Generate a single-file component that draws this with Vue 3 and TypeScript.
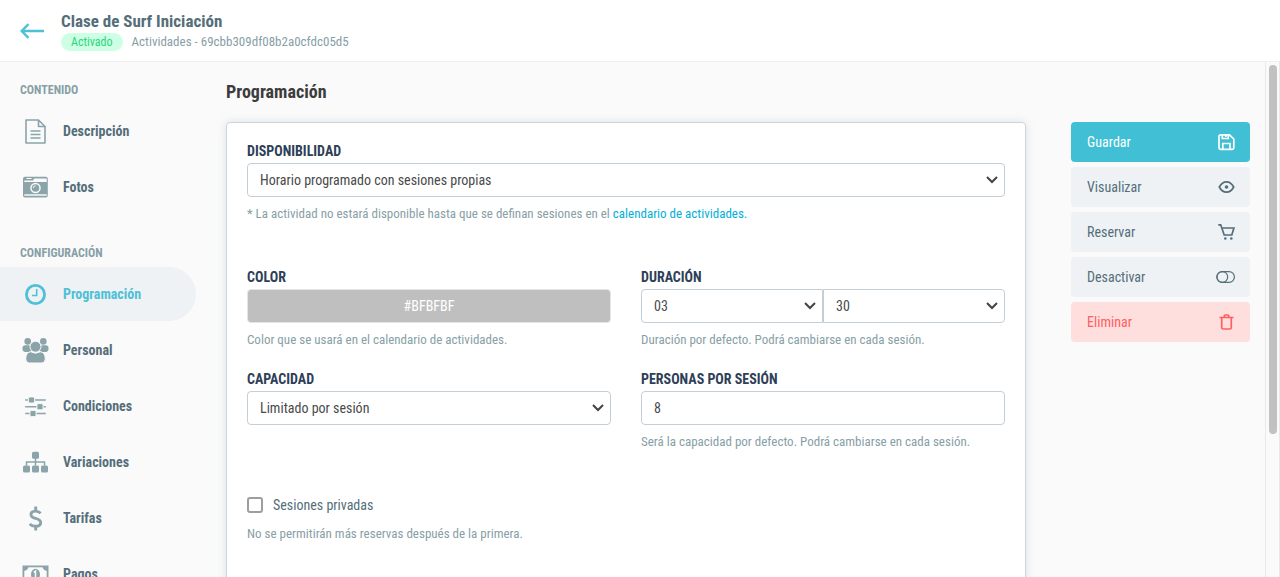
<script setup lang="ts">
import { ref } from 'vue'

interface NavItem {
  label: string
  icon: string
  active?: boolean
}
interface NavGroup {
  title: string
  items: NavItem[]
}

const groups: NavGroup[] = [
  {
    title: 'Contenido',
    items: [
      { label: 'Descripción', icon: 'document' },
      { label: 'Fotos', icon: 'camera' },
    ],
  },
  {
    title: 'Configuración',
    items: [
      { label: 'Programación', icon: 'clock', active: true },
      { label: 'Personal', icon: 'people' },
      { label: 'Condiciones', icon: 'sliders' },
      { label: 'Variaciones', icon: 'tree' },
      { label: 'Tarifas', icon: 'dollar' },
      { label: 'Pagos', icon: 'money' },
    ],
  },
]

const actions = [
  { label: 'Guardar', icon: 'save', tone: 'primary' },
  { label: 'Visualizar', icon: 'eye', tone: 'plain' },
  { label: 'Reservar', icon: 'cart', tone: 'plain' },
  { label: 'Desactivar', icon: 'toggle', tone: 'plain' },
  { label: 'Eliminar', icon: 'trash', tone: 'danger' },
]

const availability = ref('Horario programado con sesiones propias')
const hours = ref('03')
const minutes = ref('30')
const capacity = ref('Limitado por sesión')
const people = ref('8')
const color = ref('#BFBFBF')
const privateSessions = ref(false)
</script>

<template>
  <div class="page">
    <header class="topbar">
      <a class="back" href="#" aria-label="Volver">
        <svg width="24" height="16" viewBox="0 0 24 16" fill="none" stroke="currentColor" stroke-width="2.4">
          <path d="M24 8H2M8.500 1.200L1.700 8l6.800 6.800" />
        </svg>
      </a>
      <div>
        <h1>Clase de Surf Iniciación</h1>
        <div class="meta">
          <span class="badge">Activado</span>
          <span>Actividades - 69cbb309df08b2a0cfdc05d5</span>
        </div>
      </div>
    </header>

    <div class="body">
      <nav class="sidebar">
        <section v-for="group in groups" :key="group.title" class="group">
          <h2>{{ group.title }}</h2>
          <a v-for="item in group.items" :key="item.label" href="#" class="nav-item" :class="{ active: item.active }">
            <svg class="nav-icon" width="27" height="27" viewBox="-.5 -.5 27 27" fill="none" stroke="currentColor">
              <g v-if="item.icon === 'document'" stroke-width="1.6" stroke-linejoin="round">
                <path d="M3.500 1.500h12.500l6.500 6.500v16.500h-19zM16 1.500V8h6.500" />
                <path d="M8 12.500h10M8 16h10M8 19.500h10" />
              </g>
              <g v-else-if="item.icon === 'camera'" stroke="none" fill="currentColor">
                <path fill-rule="evenodd" d="M2.500 2.300h20.800a2 2 0 0 1 2 2v16.800a2 2 0 0 1-2 2h-20.800a2 2 0 0 1-2-2V4.300a2 2 0 0 1 2-2zM1.800 6v1.500h22.400V4H11.500l-.8 2zM1.800 19.700v1.500h22.400v-1.500zM4 3.500v1h5v-1zM13 8.200a5.300 5.300 0 1 0 0 10.600a5.300 5.300 0 0 0 0-10.600z" />
                <circle cx="13" cy="13.500" r="3.800" />
                <path d="M10.800 13.500a2.200 2.200 0 0 1 2.200-2.200" fill="none" stroke="#fafafa" />
              </g>
              <g v-else-if="item.icon === 'clock'">
                <circle cx="13" cy="13" r="9.100" stroke-width="2.800" />
                <path d="M14.200 7.500v6.500H9.500" stroke-width="1.600" />
              </g>
              <g v-else-if="item.icon === 'people'" stroke="none" fill="currentColor">
                <circle cx="5.200" cy="3.900" r="3.300" /><circle cx="20.800" cy="3.900" r="3.300" />
                <rect x="0" y="7.800" width="9" height="6.600" rx="2.800" /><rect x="17" y="7.800" width="9" height="6.600" rx="2.800" />
                <g class="halo">
                  <circle cx="13" cy="9.200" r="5.500" />
                  <path d="M8.300 14.200Q13 17.200 17.700 14.200Q22.800 14.800 22.800 21.500Q22.800 25.500 19.200 25.500H6.800Q3.200 25.500 3.200 21.500Q3.200 14.800 8.300 14.200z" />
                </g>
              </g>
              <g v-else-if="item.icon === 'sliders'">
                <path d="M2.700 6.500h20.600M2.700 13.200h20.600M2.700 20h20.600" stroke-width="1.500" />
                <g class="halo" fill="currentColor">
                  <rect x="5.900" y="3.400" width="6.200" height="6.200" rx="1.500" />
                  <rect x="14.400" y="10.100" width="6.200" height="6.200" rx="1.500" />
                  <rect x="7.400" y="16.900" width="6.200" height="6.200" rx="1.500" />
                </g>
              </g>
              <g v-else-if="item.icon === 'tree'">
                <path d="M13 8v8M4 16v-3.500h18V16" stroke-width="1.500" />
                <g fill="currentColor" stroke="none">
                  <rect x="9.500" y="2.300" width="7" height="7" rx="1.500" /><rect x=".5" y="16" width="7" height="7" rx="1.500" />
                  <rect x="9.500" y="16" width="7" height="7" rx="1.500" /><rect x="18.500" y="16" width="7" height="7" rx="1.500" />
                </g>
              </g>
              <g v-else-if="item.icon === 'dollar'">
                <path d="M18.200 7.700Q16 5.500 12.800 5.600Q8.500 5.800 8.500 9Q8.500 11.800 13 12.800Q18.200 14 18.200 17.300Q18 20.700 13.200 20.800Q9.500 20.800 7.200 18.400M13.200 1v4.500M13.200 20.500V25" stroke-width="2.900" />
              </g>
              <g v-else-if="item.icon === 'money'">
                <rect x=".9" y="4.900" width="24.200" height="16.200" stroke-width="1.800" />
                <path d="M1 5h5Q5.500 9 1 9.500zM25 5h-5Q20.500 9 25 9.500zM1 21h5Q5.500 17 1 16.500zM25 21h-5Q20.500 17 25 16.500z" fill="currentColor" stroke="none" />
                <ellipse cx="13" cy="13" rx="4.500" ry="5.800" fill="currentColor" stroke="none" />
                <path d="M11.300 10.800l1.700-1.300v7M11 16.500h4" stroke="#fafafa" stroke-width="1.500" />
              </g>
            </svg>
            <span>{{ item.label }}</span>
          </a>
        </section>
      </nav>

      <main class="main">
        <h2 class="title">Programación</h2>
        <form class="card" @submit.prevent>
          <div class="field">
            <label for="availability">Disponibilidad</label>
            <div class="select">
              <select id="availability" v-model="availability">
                <option>Horario programado con sesiones propias</option>
              </select>
              <svg width="12" height="8" viewBox="0 0 12 8"><path d="M1 1l5 5 5-5" /></svg>
            </div>
            <p>* La actividad no estará disponible hasta que se definan sesiones en el <a href="#">calendario de actividades.</a></p>
          </div>

          <div class="grid">
            <div class="field">
              <label for="color">Color</label>
              <input id="color" v-model="color" class="swatch" type="text" />
              <p>Color que se usará en el calendario de actividades.</p>
            </div>
            <div class="field">
              <label for="hours">Duración</label>
              <div class="pair">
                <div class="select">
                  <select id="hours" v-model="hours"><option>03</option></select>
                  <svg width="12" height="8" viewBox="0 0 12 8"><path d="M1 1l5 5 5-5" /></svg>
                </div>
                <div class="select">
                  <select v-model="minutes" aria-label="Minutos"><option>30</option></select>
                  <svg width="12" height="8" viewBox="0 0 12 8"><path d="M1 1l5 5 5-5" /></svg>
                </div>
              </div>
              <p>Duración por defecto. Podrá cambiarse en cada sesión.</p>
            </div>
            <div class="field">
              <label for="capacity">Capacidad</label>
              <div class="select">
                <select id="capacity" v-model="capacity"><option>Limitado por sesión</option></select>
                <svg width="12" height="8" viewBox="0 0 12 8"><path d="M1 1l5 5 5-5" /></svg>
              </div>
            </div>
            <div class="field">
              <label for="people">Personas por sesión</label>
              <input id="people" v-model="people" type="text" />
              <p>Será la capacidad por defecto. Podrá cambiarse en cada sesión.</p>
            </div>
          </div>

          <div class="private">
            <label class="check" for="private">
              <input id="private" v-model="privateSessions" type="checkbox" />
              <span>Sesiones privadas</span>
            </label>
            <p>No se permitirán más reservas después de la primera.</p>
          </div>
        </form>
      </main>

      <aside class="actions">
        <button v-for="action in actions" :key="action.label" type="button" :class="action.tone">
          <span>{{ action.label }}</span>
          <svg width="20" height="20" viewBox="0 0 20 20" fill="none" stroke="currentColor" stroke-width="1.700">
            <g v-if="action.icon === 'save'">
              <path d="M4.500 2.800h9l4.300 4.200V15.800a1.500 1.500 0 0 1-1.500 1.500H4.500A1.500 1.500 0 0 1 3 15.800V4.300A1.500 1.500 0 0 1 4.500 2.800z" />
              <path d="M6.800 17.300V11.500h7.200v5.800M6.300 2.800v3.700h6V2.800M9.800 3v2" />
            </g>
            <g v-else-if="action.icon === 'eye'">
              <path d="M3.300 10Q6 4.800 10.500 4.800T17.700 10Q15 15.200 10.500 15.200T3.300 10z" stroke-linejoin="round" />
              <circle cx="10.500" cy="10" r="1.800" fill="currentColor" stroke="none" />
            </g>
            <g v-else-if="action.icon === 'cart'">
              <path d="M2.300 2.800h2.400l3.500 10.200h7.600l2.100-7H5.800" />
              <circle cx="9.300" cy="16.500" r="1.300" fill="currentColor" stroke="none" />
              <circle cx="15.300" cy="16.500" r="1.300" fill="currentColor" stroke="none" />
            </g>
            <g v-else-if="action.icon === 'toggle'" stroke-width="1.200">
              <rect x=".9" y="4.600" width="17.500" height="10.800" rx="5.400" />
              <circle cx="6.300" cy="10" r="5.400" />
            </g>
            <g v-else>
              <path d="M3.500 5.500h14M5.700 5.500v10a1.500 1.500 0 0 0 1.500 1.500h6.600a1.500 1.500 0 0 0 1.500-1.500v-10M8.300 5.500V3.800a.8.800 0 0 1 .8-.8h2.800a.8.800 0 0 1 .8.800v1.700" />
            </g>
          </svg>
        </button>
      </aside>

      <div class="track"><div class="thumb"></div></div>
    </div>
  </div>
</template>

<style>
body {
  margin: 0;
}
</style>

<style scoped>
* {
  box-sizing: border-box;
}
.page {
  height: 100vh;
  display: flex;
  flex-direction: column;
  overflow: hidden;
  background: #fafafa;
  color: #546e7a;
  font-family: "Roboto Condensed", Roboto, sans-serif;
  font-size: 14px;
  line-height: 16px;
}
h1, h2, p {
  margin: 0;
}
a {
  text-decoration: none;
}
.topbar {
  flex: none;
  display: flex;
  align-items: center;
  gap: 17px;
  height: 62px;
  padding: 0 20px;
  background: #fff;
  border-bottom: 1px solid #eee;
}
.back {
  display: flex;
  color: #4fc0d5;
}
h1 {
  font-size: 17px;
  line-height: 20px;
}
.meta {
  display: flex;
  align-items: center;
  gap: 9px;
  margin-top: 2px;
  font-size: 13px;
  line-height: 18px;
  color: #87a0a6;
}
.badge {
  padding: 0 10px;
  border-radius: 9px;
  background: #ccffe4;
  color: #2bd47d;
  font-size: 12px;
}
.body {
  flex: 1;
  min-height: 0;
  display: flex;
}
.sidebar {
  flex: none;
  width: 196px;
  overflow: hidden;
  padding-top: 20px;
}
.group {
  margin-bottom: 31px;
}
.group h2 {
  padding-left: 20px;
  margin-bottom: 6px;
  font-size: 12px;
  line-height: 16px;
  text-transform: uppercase;
  color: #87a0a6;
}
.nav-item {
  display: flex;
  align-items: center;
  gap: 14px;
  height: 54px;
  margin-bottom: 2px;
  padding-left: 22px;
  border-radius: 0 27px 27px 0;
  color: #546e7a;
  font-weight: 700;
}
.nav-icon {
  color: #8ba4aa;
}
.halo {
  stroke: #fafafa;
  stroke-width: 1;
}
.nav-item.active {
  background: #eef2f5;
}
.nav-item.active, .active .nav-icon {
  color: #4fc0d5;
}
.main {
  flex: 1;
  min-width: 0;
  margin: 20px 45px 0 30px;
}
.title {
  margin-bottom: 20px;
  font-size: 18px;
  line-height: 20px;
  color: #3c3c3c;
}
.card {
  min-height: 600px;
  padding: 20px;
  border: 1px solid #cbd5df;
  border-radius: 4px;
  background: #fff;
  box-shadow: 0 0 10px rgba(96, 125, 139, 0.2);
}
.field label {
  display: block;
  margin-bottom: 4px;
  font-weight: 700;
  text-transform: uppercase;
  color: #2e4057;
}
.card p {
  margin-top: 9px;
  font-size: 13px;
  color: #87a0a6;
}
.card p a {
  color: #00b0d8;
}
select, input[type="text"] {
  display: block;
  width: 100%;
  height: 34px;
  margin: 0;
  padding: 0 12px;
  border: 1px solid #c3ced6;
  border-radius: 4px;
  background: #fff;
  color: #4a4a4a;
  font: inherit;
  appearance: none;
}
.select {
  display: grid;
  align-items: center;
}
.select > * {
  grid-area: 1 / 1;
}
.select svg {
  justify-self: end;
  margin-right: 7px;
  fill: none;
  stroke: #444;
  stroke-width: 2;
  pointer-events: none;
}
.grid {
  display: grid;
  grid-template-columns: 1fr 1fr;
  gap: 23px 30px;
  margin-top: 47px;
}
input.swatch[type="text"] {
  border-color: #e2e6e9;
  background: #bfbfbf;
  color: #fff;
  text-align: center;
}
.pair {
  display: grid;
  grid-template-columns: 1fr 1fr;
}
.pair .select:first-child select {
  border-radius: 4px 0 0 4px;
}
.pair .select:last-child select {
  border-radius: 0 4px 4px 0;
}
.private {
  margin-top: 45px;
}
.check {
  display: flex;
  align-items: center;
  gap: 10px;
  line-height: 20px;
}
.check input {
  width: 16px;
  height: 16px;
  margin: 0;
  border: 2px solid #9e9e9e;
  border-radius: 3px;
  background: #fff;
  appearance: none;
}
.check input:checked {
  background: #40bfd5;
}
.private p {
  margin-top: 11px;
}
.actions {
  flex: none;
  display: flex;
  flex-direction: column;
  gap: 5px;
  width: 179px;
  margin: 60px 15px 0 0;
}
.actions button {
  display: flex;
  align-items: center;
  justify-content: space-between;
  height: 40px;
  padding: 0 14px 0 16px;
  border: 0;
  border-radius: 4px;
  background: #eef2f5;
  color: #546e7a;
  font: inherit;
}
.actions .primary {
  background: #40bfd5;
  color: #fff;
}
.actions .danger {
  background: #ffdede;
  color: #ff5f5f;
}
.track {
  flex: none;
  width: 15px;
  padding: 3px 2px 0 3px;
  border: solid #e8e8e8;
  border-width: 0 1px;
}
.thumb {
  width: 8px;
  height: 72%;
  border-radius: 4px;
  background: #c1c1c1;
}
</style>
